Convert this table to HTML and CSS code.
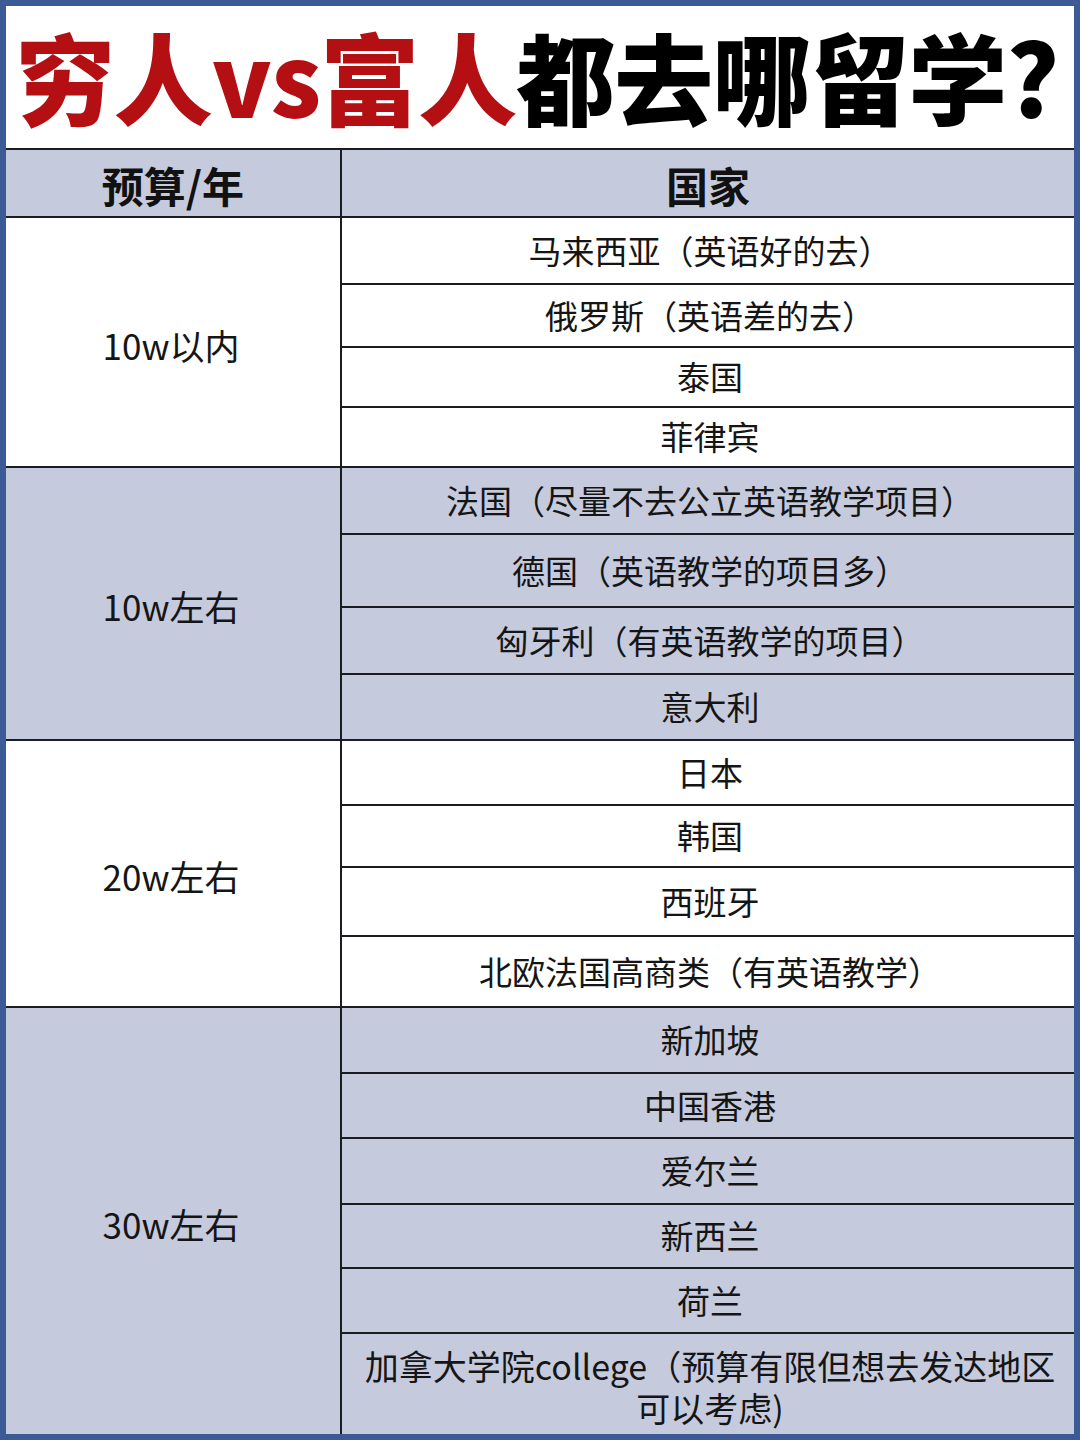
FILE: index.html
```html
<!DOCTYPE html>
<html lang="zh-CN">
<head>
<meta charset="utf-8">
<title>穷人vs富人都去哪留学?</title>
<link rel="stylesheet" href="styles.css">
</head>
<body>
<div class="frame">
  <h1 class="title"><span class="red">穷人vs富人</span>都去哪留学?</h1>
  <div class="table">
    <div class="head">
      <div class="hcell left">预算/年</div>
      <div class="hcell">国家</div>
    </div>

    <div class="group white">
      <div class="budget">10w以内</div>
      <div class="list">
        <div class="row h67">马来西亚（英语好的去）</div>
        <div class="row h63">俄罗斯（英语差的去）</div>
        <div class="row h60">泰国</div>
        <div class="row h58">菲律宾</div>
      </div>
    </div>

    <div class="group blue">
      <div class="budget">10w左右</div>
      <div class="list">
        <div class="row h67">法国（尽量不去公立英语教学项目）</div>
        <div class="row h73">德国（英语教学的项目多）</div>
        <div class="row h67">匈牙利（有英语教学的项目）</div>
        <div class="row h64">意大利</div>
      </div>
    </div>

    <div class="group white">
      <div class="budget">20w左右</div>
      <div class="list">
        <div class="row h65">日本</div>
        <div class="row h62">韩国</div>
        <div class="row h69">西班牙</div>
        <div class="row h69">北欧法国高商类（有英语教学）</div>
      </div>
    </div>

    <div class="group blue last">
      <div class="budget">30w左右</div>
      <div class="list">
        <div class="row h66">新加坡</div>
        <div class="row h65">中国香港</div>
        <div class="row h66">爱尔兰</div>
        <div class="row h64">新西兰</div>
        <div class="row h65">荷兰</div>
        <div class="row h100 wrap"><span class="line">加拿大学院college（预算有限但想去发达地区</span><span class="line">可以考虑)</span></div>
      </div>
    </div>
  </div>
</div>
</body>
</html>
```

FILE: styles.css
```css
* { box-sizing: border-box; }
html, body { margin: 0; padding: 0; }
body {
  width: 1080px;
  height: 1440px;
  font-family: "Noto Sans CJK SC", "Noto Sans", sans-serif;
  color: #151515;
  background: #3b5a96;
}
.frame {
  width: 1080px;
  height: 1440px;
  border: 6px solid #3b5a96;
  background: #ffffff;
  display: flex;
  flex-direction: column;
}
.title {
  margin: 0;
  height: 142px;
  display: flex;
  align-items: center;
  justify-content: center;
  font-size: 99px;
  font-weight: 900;
  color: #000;
  letter-spacing: -1px;
  line-height: 1;
  padding-bottom: 4px;
  padding-right: 6px;
  white-space: nowrap;
}
.red { color: #b40f12; }
.table { display: flex; flex-direction: column; }
.head {
  display: grid;
  grid-template-columns: 336px 1fr;
  height: 70px;
  background: #c5cbdd;
  border-top: 2px solid #1b1c22;
  border-bottom: 2px solid #1b1c22;
}
.hcell {
  display: flex;
  align-items: center;
  justify-content: center;
  font-size: 42px;
  font-weight: 700;
  color: #111;
  padding-top: 2px;
}
.hcell.left { border-right: 2px solid #1b1c22; }
.group {
  display: grid;
  grid-template-columns: 336px 1fr;
  border-bottom: 2px solid #1b1c22;
}
.group.last { border-bottom: none; }
.white { background: #ffffff; }
.blue { background: #c5cbdd; }
.budget {
  display: flex;
  align-items: center;
  justify-content: center;
  font-size: 35px;
  border-right: 2px solid #1b1c22;
  padding-right: 4px;
  padding-top: 4px;
}
.list { display: flex; flex-direction: column; }
.row {
  display: flex;
  align-items: center;
  justify-content: center;
  text-align: center;
  font-size: 33px;
  line-height: 1.25;
  border-bottom: 2px solid #1b1c22;
  padding-left: 4px;
  white-space: nowrap;
}
.row:last-child { border-bottom: none; }
.wrap {
  flex-direction: column;
  font-size: 34px;
  padding: 6px 0 0 4px;
}
.wrap .line { display: block; height: 42px; line-height: 42px; }
.h58 { height: 58px; }
.h60 { height: 60px; }
.h62 { height: 62px; }
.h63 { height: 63px; }
.h64 { height: 64px; }
.h65 { height: 65px; }
.h66 { height: 66px; }
.h67 { height: 67px; }
.h69 { height: 69px; }
.h73 { height: 73px; }
.h100 { height: 100px; }
```
